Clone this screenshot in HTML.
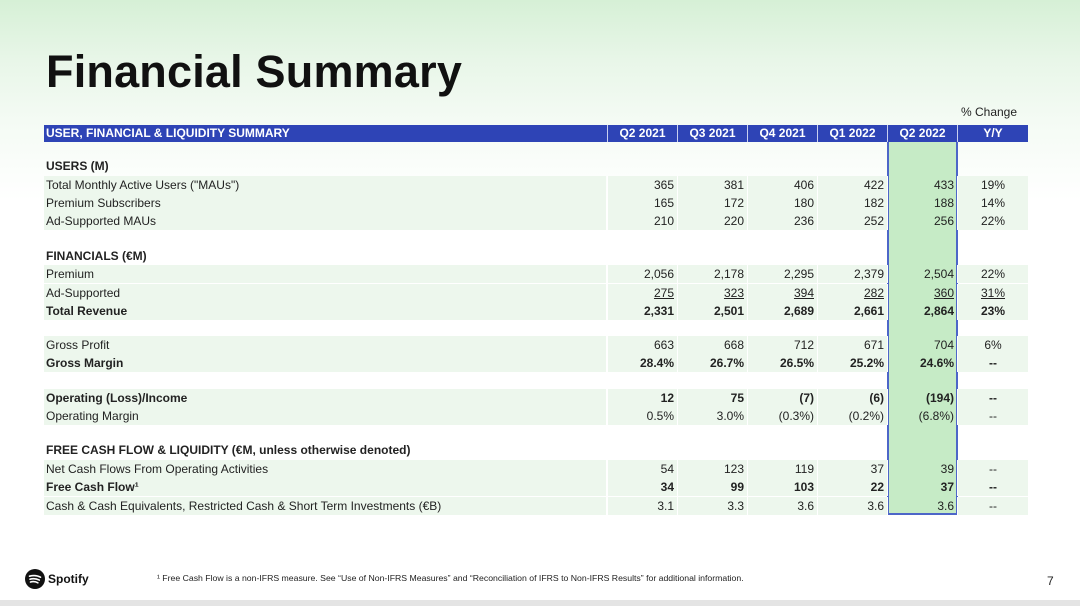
<!DOCTYPE html>
<html><head><meta charset="utf-8"><style>
*{margin:0;padding:0;box-sizing:border-box}
body{width:1080px;height:606px;overflow:hidden;position:relative;font-family:"Liberation Sans",Arial,sans-serif;color:#222;
background:linear-gradient(180deg,#d6f0d6 0px,#e8f6e8 60px,#f4fbf4 120px,#fff 200px,#fff 100%)}
h1{position:absolute;left:46px;top:46px;font-size:45px;font-weight:bold;color:#111;letter-spacing:0.2px}
.pc{position:absolute;left:960px;top:105px;font-size:12px;width:58px;text-align:center}
.hdr{position:absolute;left:44px;top:125px;width:984px;height:17px;background:#2e44b6;color:#fff;font-weight:bold;font-size:12px}
.hdr div{position:absolute;top:0;height:17px;line-height:17px}
.hdr .c{border-left:1px solid #c9d0f0;text-align:center}
.hl{position:absolute;left:887px;top:142px;width:71px;height:373px;background:#c6ebc6;border:2px solid #4d66c8;border-top:none}
.r{position:absolute;left:44px;width:984px;height:18px;font-size:12px;line-height:18px}
.r.s .bg{background:#edf7ed}
.r div{position:absolute;top:0;height:18px}
.r .l{left:0;width:562px;padding-left:2px}
.r .n{text-align:right;padding-right:3px;width:70px;border-left:1px solid #fff}
.r .y{text-align:center;width:71px;border-left:1px solid #fff}
.b{font-weight:bold}
.u .n span,.u .y span{text-decoration:underline}
.foot{position:absolute;left:157px;top:573px;font-size:8.7px;color:#222}
.pg{position:absolute;left:1047px;top:574px;font-size:12px}
.logo{position:absolute;left:25px;top:569px;display:flex;align-items:center;font-weight:bold;font-size:12px;color:#111}
.bot{position:absolute;left:0;top:600px;width:1080px;height:6px;background:#e4e4e4}
</style></head><body>
<h1>Financial Summary</h1>
<div class="pc">% Change</div>
<div class="hdr">
<div style="left:2px">USER, FINANCIAL &amp; LIQUIDITY SUMMARY</div>
<div class="c" style="left:563px;width:70px">Q2 2021</div>
<div class="c" style="left:633px;width:70px">Q3 2021</div>
<div class="c" style="left:703px;width:70px">Q4 2021</div>
<div class="c" style="left:773px;width:70px">Q1 2022</div>
<div class="c" style="left:843px;width:70px">Q2 2022</div>
<div class="c" style="left:913px;width:71px">Y/Y</div>
</div>
<div class="hl"></div>
<div id="rows"></div>
<script>
const rows=[
[157,'USERS (M)',null,'b'],
[176,'Total Monthly Active Users ("MAUs")',['365','381','406','422','433','19%'],'s'],
[194,'Premium Subscribers',['165','172','180','182','188','14%'],'s'],
[212,'Ad-Supported MAUs',['210','220','236','252','256','22%'],'s'],
[247,'FINANCIALS (€M)',null,'b'],
[265,'Premium',['2,056','2,178','2,295','2,379','2,504','22%'],'s'],
[284,'Ad-Supported',['275','323','394','282','360','31%'],'s u'],
[302,'Total Revenue',['2,331','2,501','2,689','2,661','2,864','23%'],'s b'],
[336,'Gross Profit',['663','668','712','671','704','6%'],'s'],
[354,'Gross Margin',['28.4%','26.7%','26.5%','25.2%','24.6%','--'],'s b'],
[389,'Operating (Loss)/Income',['12','75','(7)','(6)','(194)','--'],'s b'],
[407,'Operating Margin',['0.5%','3.0%','(0.3%)','(0.2%)','(6.8%)','--'],'s'],
[441,'FREE CASH FLOW &amp; LIQUIDITY (€M, unless otherwise denoted)',null,'b'],
[460,'Net Cash Flows From Operating Activities',['54','123','119','37','39','--'],'s'],
[478,'Free Cash Flow¹',['34','99','103','22','37','--'],'s b'],
[497,'Cash &amp; Cash Equivalents, Restricted Cash &amp; Short Term Investments (€B)',['3.1','3.3','3.6','3.6','3.6','--'],'s'],
];
let h='';
for(const [t,l,v,c] of rows){
 h+=`<div class="r ${c}" style="top:${t}px"><div class="l${c.includes('s')?' bg':''}">${l}</div>`;
 if(v){v.forEach((x,i)=>{const left=563+i*70;const hl=i==4;
  h+=`<div class="${i==5?'y':'n'}${hl?'':' bg'}" style="left:${left}px">${'<span>'+x+'</span>'}</div>`;});}
 h+='</div>';
}
document.getElementById('rows').innerHTML=h;
</script>
<div class="logo"><svg width="20" height="20" viewBox="0 0 20 20"><circle cx="10" cy="10" r="10" fill="#111"/><path d="M4.5 7.2c3.8-1.1 7.8-.8 11 1M5 10.2c3.2-.9 6.5-.6 9.3.9M5.5 13c2.6-.7 5.2-.4 7.4.8" stroke="#fff" stroke-width="1.6" fill="none" stroke-linecap="round"/></svg><span style="margin-left:3px">Spotify</span></div>
<div class="foot">¹ Free Cash Flow is a non-IFRS measure. See “Use of Non-IFRS Measures” and “Reconciliation of IFRS to Non-IFRS Results” for additional information.</div>
<div class="pg">7</div>
<div class="bot"></div>
</body></html>
